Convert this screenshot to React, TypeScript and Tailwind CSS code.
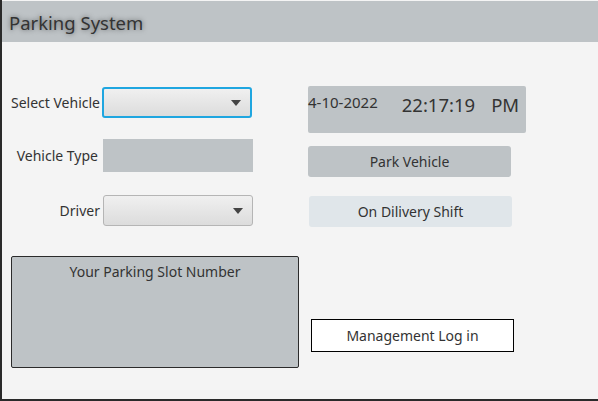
import React from 'react';

function Caret() {
  return (
    <svg width="10" height="6" viewBox="0 0 10 6" className="shrink-0">
      <path d="M0 0h10L5 6z" fill="#444" />
    </svg>
  );
}

function Combo({ focused }: { focused?: boolean }) {
  return (
    <div
      className={`flex h-[31px] w-[150px] items-center justify-end rounded-[3px] bg-gradient-to-b from-[#f0f0f0] to-[#dcdcdc] pr-[9px] ${
        focused ? 'border-2 border-[#1fa6e0]' : 'border border-[#b5b5b5]'
      }`}
    >
      <Caret />
    </div>
  );
}

export default function App() {
  return (
    <div
      className="flex h-[401px] w-[598px] flex-col border-b-2 border-l-2 border-[#2a2a2a] bg-[#f4f4f4] text-[#333]"
      style={{ fontFamily: '"Noto Sans", "Open Sans", sans-serif' }}
    >
      {/* Header */}
      <div className="mt-px flex h-[41px] items-center bg-[#bec3c6] pl-[7px] pt-[3px]">
        <h1 className="text-[18.5px] leading-none text-[#333] [text-shadow:0_0_5px_rgba(0,0,0,0.55)]">Parking System</h1>
      </div>

      <div className="flex flex-1">
        {/* Left column */}
        <div className="flex w-[306px] flex-col pt-[45px]">
          <div className="flex items-center">
            <span className="w-[98px] text-right text-[14px]">Select Vehicle</span>
            <div className="ml-[2px]">
              <Combo focused />
            </div>
          </div>

          <div className="mt-[21px] flex items-center">
            <span className="w-[96px] text-right text-[14px]">Vehicle Type</span>
            <div className="ml-[5px] h-[33px] w-[150px] bg-[#bec3c6]" />
          </div>

          <div className="mt-[23px] flex items-center">
            <span className="w-[98px] text-right text-[14px]">Driver</span>
            <div className="ml-[3px]">
              <Combo />
            </div>
          </div>

          <div className="ml-[9px] mt-[30px] h-[112px] w-[288px] rounded-[2px] border border-[#2b2b2b] bg-[#bec3c6] pt-[4px] text-center text-[14px]">
            Your Parking Slot Number
          </div>
        </div>

        {/* Right column */}
        <div className="flex flex-col pt-[44px]">
          <div className="flex h-[47px] w-[218px] items-start rounded-[2px] bg-[#bec3c6]">
            <span className="mt-[5px] text-[15px]">4-10-2022</span>
            <span className="ml-[24px] mt-[5px] text-[18.5px]">22:17:19</span>
            <span className="ml-[16px] mt-[5px] text-[18.5px]">PM</span>
          </div>

          <button className="mt-[13px] h-[31px] w-[203px] rounded-[3px] bg-[#bec3c6] text-[14px]">Park Vehicle</button>

          <button className="ml-px mt-[19px] h-[31px] w-[203px] rounded-[3px] bg-[#e0e6ea] text-[14px]">On Dilivery Shift</button>

          <button className="ml-[3px] mt-[92px] h-[33px] w-[203px] border border-black bg-white text-[14px]">Management Log in</button>
        </div>
      </div>
    </div>
  );
}
